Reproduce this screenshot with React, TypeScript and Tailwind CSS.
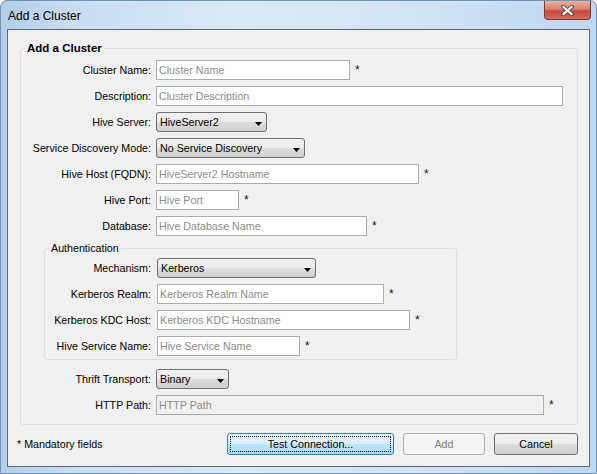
import React from 'react';

const Star = () => (
  <span className="ml-[5px] self-start pt-[4px] text-[12px] leading-none text-[#1a1a1a]">*</span>
);

const Field = ({ ph, w, disabled }: { ph: string; w: string; disabled?: boolean }) => (
  <input
    placeholder={ph}
    disabled={disabled}
    className={`${w} h-[20px] shrink-0 border px-[2px] text-[10.7px] outline-none placeholder:text-[#8b8b8b] ${
      disabled ? 'border-[#adadad] bg-[#f0f0f0]' : 'border-[#abadb3] bg-white'
    }`}
  />
);

const Combo = ({ value, w }: { value: string; w: string }) => (
  <div
    className={`${w} flex h-[20px] shrink-0 items-center rounded-[3px] border border-[#707070] bg-[linear-gradient(to_bottom,#f2f2f2_0%,#ebebeb_50%,#dddddd_50%,#cfcfcf_100%)] pl-[3px] pr-[4px] text-[10.7px] text-black`}
  >
    <span className="flex-1">{value}</span>
    <svg width="7" height="4" viewBox="0 0 7 4" className="mt-[3px]">
      <path d="M0 0H7L3.5 4Z" fill="#000" />
    </svg>
  </div>
);

const Row = ({ label, lw, children }: { label: string; lw: string; children: React.ReactNode }) => (
  <div className="flex h-[20px] items-center">
    <span className={`${lw} shrink-0 text-right text-[10.7px] leading-none text-black`}>{label}</span>
    {children}
  </div>
);

const MAIN = 'w-[130px] mr-[5px]';
const AUTH = 'w-[106px] mr-[6px]';

export default function App() {
  return (
    <div className="h-[474px] w-[597px] bg-white font-['Liberation_Sans',Arial,sans-serif]">
      <div className="flex h-full flex-col rounded-t-[7px] border border-[#7393b3] bg-[linear-gradient(to_right,#b3cde9_0%,#c9ddf1_12%,#dbeaf8_40%,#d3e4f4_70%,#bfd6ee_100%)]">
        {/* title bar */}
        <div className="flex h-[28px] shrink-0 items-start">
          <span className="ml-[7px] mt-[8px] text-[12px] leading-[14px] text-black">Add a Cluster</span>
          <div className="ml-auto mr-[5px] flex h-[19px] w-[47px] items-center justify-center rounded-b-[4px] border border-t-0 border-[#7a3a33] bg-[linear-gradient(to_bottom,#eab0a2_0%,#d9806f_45%,#c54c3e_55%,#d56a58_100%)]">
            <svg width="13" height="11" viewBox="0 0 13 11">
              <path d="M2 1.5L11 9.5M11 1.5L2 9.5" stroke="#5b4a4a" strokeWidth="3.8" strokeLinecap="square" />
              <path d="M2.5 2L10.5 9M10.5 2L2.5 9" stroke="#fff" strokeWidth="2.1" strokeLinecap="square" />
            </svg>
          </div>
        </div>

        {/* client area */}
        <div className="mx-[6px] flex h-[438px] shrink-0 flex-col border border-[#5d6b79] bg-[#f0f0f0]">
          <fieldset className="ml-[12px] mt-[11px] w-[558px] rounded-[3px] border border-[#d5dfe5] pb-[9px] pt-[5px]">
            <legend className="ml-[4px] px-[2px] text-[11.5px] font-bold leading-[14px] text-black">Add a Cluster</legend>
            <div className="flex flex-col gap-[6px]">
              <Row label="Cluster Name:" lw={MAIN}>
                <Field ph="Cluster Name" w="w-[194px]" />
                <Star />
              </Row>
              <Row label="Description:" lw={MAIN}>
                <Field ph="Cluster Description" w="w-[407px]" />
              </Row>
              <Row label="Hive Server:" lw={MAIN}>
                <Combo value="HiveServer2" w="w-[111px]" />
              </Row>
              <Row label="Service Discovery Mode:" lw={MAIN}>
                <Combo value="No Service Discovery" w="w-[149px]" />
              </Row>
              <Row label="Hive Host (FQDN):" lw={MAIN}>
                <Field ph="HiveServer2 Hostname" w="w-[263px]" />
                <Star />
              </Row>
              <Row label="Hive Port:" lw={MAIN}>
                <Field ph="Hive Port" w="w-[83px]" />
                <Star />
              </Row>
              <Row label="Database:" lw={MAIN}>
                <Field ph="Hive Database Name" w="w-[211px]" />
                <Star />
              </Row>
            </div>

            <fieldset className="ml-[23px] mt-[5px] w-[413px] rounded-[3px] border border-[#d5dfe5] pb-[3px] pt-[3px]">
              <legend className="ml-[4px] px-[2px] text-[10.7px] leading-[14px] text-black">Authentication</legend>
              <div className="flex flex-col gap-[6px]">
                <Row label="Mechanism:" lw={AUTH}>
                  <Combo value="Kerberos" w="w-[159px]" />
                </Row>
                <Row label="Kerberos Realm:" lw={AUTH}>
                  <Field ph="Kerberos Realm Name" w="w-[227px]" />
                  <Star />
                </Row>
                <Row label="Kerberos KDC Host:" lw={AUTH}>
                  <Field ph="Kerberos KDC Hostname" w="w-[253px]" />
                  <Star />
                </Row>
                <Row label="Hive Service Name:" lw={AUTH}>
                  <Field ph="Hive Service Name" w="w-[143px]" />
                  <Star />
                </Row>
              </div>
            </fieldset>

            <div className="mt-[9px] flex flex-col gap-[6px]">
              <Row label="Thrift Transport:" lw={MAIN}>
                <Combo value="Binary" w="w-[73px]" />
              </Row>
              <Row label="HTTP Path:" lw={MAIN}>
                <Field ph="HTTP Path" w="w-[388px]" disabled />
                <Star />
              </Row>
            </div>
          </fieldset>

          {/* bottom bar */}
          <div className="mt-[8px] flex items-center pl-[9px] pr-[11px]">
            <span className="text-[10.7px] text-black">* Mandatory fields</span>
            <button className="relative ml-auto h-[22px] w-[167px] rounded-[3px] border border-[#3c7fb1] bg-[linear-gradient(to_bottom,#eaf6fd_0%,#d9f0fc_50%,#bee6fd_50%,#a7d9f5_100%)] text-[10.7px] text-black">
              <span className="absolute inset-[2px] border border-dotted border-black" />
              Test Connection...
            </button>
            <button
              disabled
              className="ml-[9px] h-[22px] w-[82px] rounded-[3px] border border-[#adb2b5] bg-[#f4f4f4] text-[10.7px] text-[#838383]"
            >
              Add
            </button>
            <button className="ml-[9px] h-[22px] w-[84px] rounded-[3px] border border-[#707070] bg-[linear-gradient(to_bottom,#f2f2f2_0%,#ebebeb_50%,#dddddd_50%,#cfcfcf_100%)] text-[10.7px] text-black">
              Cancel
            </button>
          </div>
        </div>
      </div>
    </div>
  );
}
